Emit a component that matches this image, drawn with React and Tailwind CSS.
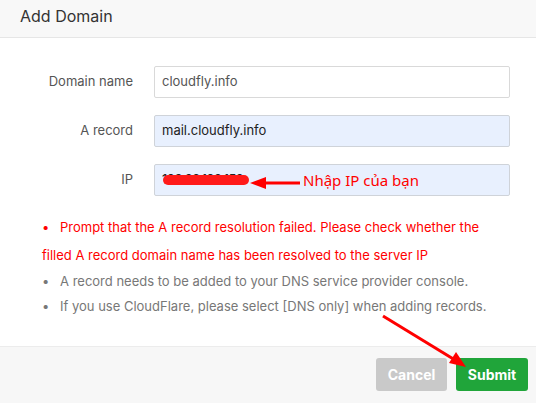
export default function App() {
  return (
    <div className="relative h-[403px] w-[536px] overflow-hidden bg-white font-['Inter',sans-serif]">
      <div className="flex h-[38px] items-center border-b border-[#e6e6e6] bg-[#f8f8f8] pb-[6px] pl-5">
        <span className="text-[16px] text-[#333]">Add Domain</span>
      </div>

      <div className="flex flex-col gap-[17px] pr-[26px] pt-[28px]">
        <div className="flex items-center">
          <label className="w-[133px] text-right text-[13px] text-[#555]">Domain name</label>
          <div className="ml-[21px] flex h-[32px] flex-1 items-center rounded-[2px] border border-[#d9d9d9] bg-white px-[7px] text-[13px] text-[#555]">
            cloudfly.info
          </div>
        </div>
        <div className="flex items-center">
          <label className="w-[133px] text-right text-[13px] text-[#555]">A record</label>
          <div className="ml-[21px] flex h-[32px] flex-1 items-center rounded-[2px] border border-[#cfd3d9] bg-[#e8f0fe] px-[7px] text-[13px] text-[#222]">
            mail.cloudfly.info
          </div>
        </div>
        <div className="flex items-center">
          <label className="w-[133px] text-right text-[13px] text-[#555]">IP</label>
          <div className="relative ml-[21px] flex h-[32px] flex-1 items-center rounded-[2px] border border-[#cfd3d9] bg-[#e8f0fe] px-[7px] text-[13px] text-[#222]">
            <span className="tracking-[-0.5px]">103.82.192.152</span>
            <span className="absolute left-[8px] top-[10px] h-[10px] w-[86px] rounded-full bg-[#ff1a1a]" />
            <span className="absolute left-[148px] top-[5px] font-['Noto_Sans',sans-serif] text-[15px] leading-[20px] text-[#ff0000]">
              Nhập IP của bạn
            </span>
          </div>
        </div>
      </div>

      <ul className="mt-[17px] pl-[42px] pr-[30px] text-[13px]">
        <li className="leading-[28px] text-[#ff0000]">
          <span className="inline-block w-[18px]">•</span>Prompt that the A record resolution failed. Please check whether the filled A record domain name has been resolved to the server IP
        </li>
        <li className="leading-[25px] text-[#777]">
          <span className="inline-block w-[18px]">•</span>A record needs to be added to your DNS service provider console.
        </li>
        <li className="leading-[25px] text-[#777]">
          <span className="inline-block w-[18px]">•</span>If you use CloudFlare, please select [DNS only] when adding records.
        </li>
      </ul>

      <div className="mt-[27px] flex h-[60px] justify-end gap-[9px] border-t border-[#ececec] bg-[#f7f7f7] pr-[8px] pt-[11px]">
        <button className="h-[33px] w-[71px] rounded-[3px] bg-[#c9c9c9] text-[14px] font-bold text-white">Cancel</button>
        <button className="h-[33px] w-[72px] rounded-[3px] bg-[#20a53a] text-[14px] font-bold text-white">Submit</button>
      </div>

      <svg className="pointer-events-none absolute left-0 top-0" width="536" height="403">
        <line x1="300" y1="183" x2="262" y2="183" stroke="#ff0000" strokeWidth="3" />
        <polygon points="250,183 266,177 266,189" fill="#ff0000" />
        <line x1="383" y1="316" x2="455" y2="360" stroke="#ff0000" strokeWidth="3" />
        <polygon points="466,367 449,363 456,352" fill="#ff0000" />
      </svg>
    </div>
  )
}
